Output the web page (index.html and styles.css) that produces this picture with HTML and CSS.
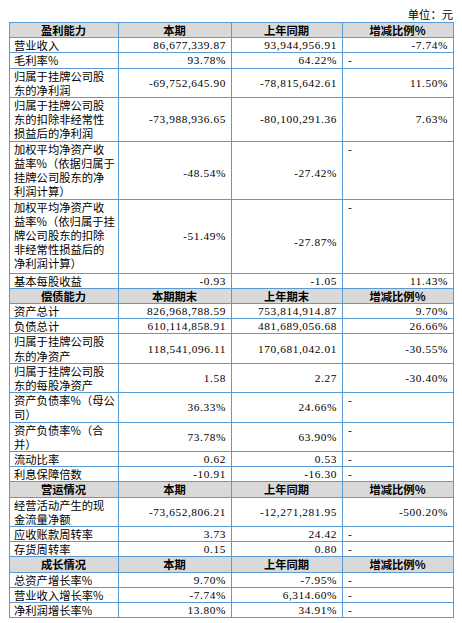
FILE: index.html
```html
<!DOCTYPE html>
<html lang="zh-CN">
<head>
    <meta charset="UTF-8">
    <title>主要会计数据和财务指标</title>
    <link rel="stylesheet" href="styles.css">
</head>
<body>
    <div class="unit">单位：元</div>

    <table class="report">
        <colgroup>
            <col class="c-label">
            <col class="c-cur">
            <col class="c-prev">
            <col class="c-rate">
        </colgroup>
        <!-- 盈利能力 -->
        <tr class="hd"><td>盈利能力</td><td>本期</td><td>上年同期</td><td>增减比例%</td></tr>
        <tr><td>营业收入</td><td class="n">86,677,339.87</td><td class="n">93,944,956.91</td><td class="n">-7.74%</td></tr>
        <tr><td>毛利率%</td><td class="n">93.78%</td><td class="n">64.22%</td><td class="d">-</td></tr>
        <tr><td>归属于挂牌公司股<br>东的净利润</td><td class="n">-69,752,645.90</td><td class="n">-78,815,642.61</td><td class="n">11.50%</td></tr>
        <tr><td>归属于挂牌公司股<br>东的扣除非经常性<br>损益后的净利润</td><td class="n">-73,988,936.65</td><td class="n">-80,100,291.36</td><td class="n">7.63%</td></tr>
        <tr class="r4"><td>加权平均净资产收<br>益率%（依据归属于<br>挂牌公司股东的净<br>利润计算）</td><td class="n low">-48.54%</td><td class="n low">-27.42%</td><td class="d">-</td></tr>
        <tr class="r5"><td>加权平均净资产收<br>益率%（依归属于挂<br>牌公司股东的扣除<br>非经常性损益后的<br>净利润计算）</td><td class="n">-51.49%</td><td class="n lower">-27.87%</td><td class="d">-</td></tr>
        <tr><td>基本每股收益</td><td class="n">-0.93</td><td class="n">-1.05</td><td class="n">11.43%</td></tr>

        <!-- 偿债能力 -->
        <tr class="hd"><td>偿债能力</td><td>本期期末</td><td>上年期末</td><td>增减比例%</td></tr>
        <tr><td>资产总计</td><td class="n">826,968,788.59</td><td class="n">753,814,914.87</td><td class="n">9.70%</td></tr>
        <tr><td>负债总计</td><td class="n">610,114,858.91</td><td class="n">481,689,056.68</td><td class="n">26.66%</td></tr>
        <tr><td>归属于挂牌公司股<br>东的净资产</td><td class="n">118,541,096.11</td><td class="n">170,681,042.01</td><td class="n">-30.55%</td></tr>
        <tr><td>归属于挂牌公司股<br>东的每股净资产</td><td class="n">1.58</td><td class="n">2.27</td><td class="n">-30.40%</td></tr>
        <tr><td>资产负债率%（母公<br>司）</td><td class="n">36.33%</td><td class="n">24.66%</td><td class="d">-</td></tr>
        <tr><td>资产负债率%（合<br>并）</td><td class="n">73.78%</td><td class="n">63.90%</td><td class="d">-</td></tr>
        <tr><td>流动比率</td><td class="n">0.62</td><td class="n">0.53</td><td class="d">-</td></tr>
        <tr><td>利息保障倍数</td><td class="n">-10.91</td><td class="n">-16.30</td><td class="d">-</td></tr>

        <!-- 营运情况 -->
        <tr class="hd"><td>营运情况</td><td>本期</td><td>上年同期</td><td>增减比例%</td></tr>
        <tr><td>经营活动产生的现<br>金流量净额</td><td class="n">-73,652,806.21</td><td class="n">-12,271,281.95</td><td class="n">-500.20%</td></tr>
        <tr><td>应收账款周转率</td><td class="n">3.73</td><td class="n">24.42</td><td class="d">-</td></tr>
        <tr><td>存货周转率</td><td class="n">0.15</td><td class="n">0.80</td><td class="d">-</td></tr>

        <!-- 成长情况 -->
        <tr class="hd"><td>成长情况</td><td>本期</td><td>上年同期</td><td>增减比例%</td></tr>
        <tr><td>总资产增长率%</td><td class="n">9.70%</td><td class="n">-7.95%</td><td class="d">-</td></tr>
        <tr><td>营业收入增长率%</td><td class="n">-7.74%</td><td class="n">6,314.60%</td><td class="d">-</td></tr>
        <tr><td>净利润增长率%</td><td class="n">13.80%</td><td class="n">34.91%</td><td class="d">-</td></tr>
    </table>
</body>
</html>
```

FILE: styles.css
```css
body {
    margin: 0;
    background: #fff;
    color: #000;
    font-family: "Noto Sans CJK SC", sans-serif;
    font-size: 11.3px;
}

.unit {
    width: 444px;
    margin-left: 9px;
    padding-top: 6px;
    height: 16px;
    line-height: 16px;
    text-align: right;
}

.report {
    width: 444px;
    margin-left: 9px;
    border-collapse: collapse;
    table-layout: fixed;
}

.c-label { width: 109px; }
.c-cur { width: 113px; }
.c-prev { width: 111px; }
.c-rate { width: 111px; }

.report td {
    border: 1px solid #5b9bd5;
    padding: 0 5px 0 4px;
    line-height: 14.2px;
    vertical-align: top;
    white-space: nowrap;
}

.report .r4 { height: 58px; }
.report .r5 { height: 74px; }

.report .hd td {
    background: #d9d9d9;
    font-weight: bold;
    text-align: center;
    vertical-align: middle;
}

.report td.n {
    font-family: "Liberation Serif", serif;
    letter-spacing: 0.6px;
    text-align: right;
    vertical-align: middle;
}

.report td.d {
    font-family: "Liberation Serif", serif;
    padding-left: 5px;
}

.report td.low {
    padding-top: 6px;
}

.report td.lower {
    padding-top: 12px;
}
```
